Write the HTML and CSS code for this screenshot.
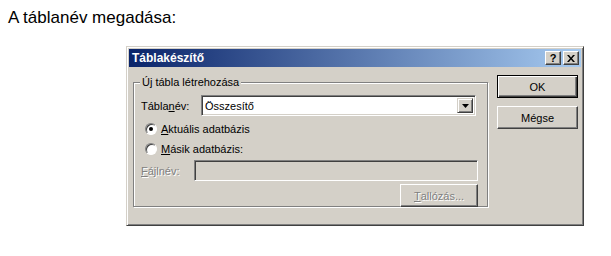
FILE: index.html
```html
<!DOCTYPE html>
<html lang="hu">
<head>
<meta charset="utf-8">
<title>Táblakészítő</title>
<link rel="stylesheet" href="styles.css">
</head>
<body>
<p class="caption">A táblanév megadása:</p>
<div class="dialog">
  <div class="titlebar">
    <span class="title">Táblakészítő</span>
    <div class="tbtns">
      <span class="tbtn">?</span>
      <span class="tbtn x">
        <svg width="8" height="7" viewBox="0 0 8 7"><path d="M0 0h2l2 2.5L6 0h2L5 3.5 8 7H6L4 4.5 2 7H0l3-3.5z" fill="#000"/></svg>
      </span>
    </div>
  </div>
  <div class="content">
    <fieldset class="group">
      <legend>Új tábla létrehozása</legend>
      <div class="row name-row">
        <label class="lbl">Tábla<u>n</u>év:</label>
        <div class="combo">
          <span class="combo-text">Összesítő</span>
          <span class="drop"><svg width="7" height="4" viewBox="0 0 7 4"><path d="M0 0h7L3.5 4z" fill="#000"/></svg></span>
        </div>
      </div>
      <div class="radio-row">
        <span class="radio checked"></span>
        <span><u>A</u>ktuális adatbázis</span>
      </div>
      <div class="radio-row">
        <span class="radio"></span>
        <span><u>M</u>ásik adatbázis:</span>
      </div>
      <div class="row file-row">
        <label class="lbl disabled"><u>F</u>ájlnév:</label>
        <div class="textbox"></div>
      </div>
      <div class="browse-row">
        <span class="btn browse disabled"><u>T</u>allózás...</span>
      </div>
    </fieldset>
    <div class="buttons">
      <span class="btn default">OK</span>
      <span class="btn">Mégse</span>
    </div>
  </div>
</div>
</body>
</html>
```
FILE: styles.css
```css
html, body {
  margin: 0;
  padding: 0;
  background: #fff;
}
.caption {
  margin: 0;
  padding: 9px 0 0 8px;
  font-family: "Liberation Sans", Arial, sans-serif;
  font-size: 17px;
  line-height: 18px;
  color: #000;
}
.dialog {
  margin: 19px 0 0 126px;
  width: 458px;
  height: 180px;
  box-sizing: border-box;
  background: #d4d0c8;
  border: 1px solid;
  border-color: #d4d0c8 #404040 #404040 #d4d0c8;
  box-shadow: inset 1px 1px 0 #fff, inset -1px -1px 0 #808080;
  padding: 2px;
  font-family: "Liberation Sans", Tahoma, sans-serif;
  font-size: 11px;
  color: #000;
  display: flex;
  flex-direction: column;
}
.titlebar {
  height: 18px;
  background: linear-gradient(to right, #0a246a, #a6caf0);
  display: flex;
  align-items: center;
  justify-content: space-between;
  padding: 0 2px 0 3px;
}
.title {
  color: #fff;
  font-weight: bold;
  font-size: 12px;
}
.tbtns {
  display: flex;
  gap: 2px;
}
.tbtn {
  width: 16px;
  height: 14px;
  box-sizing: border-box;
  background: #d4d0c8;
  border: 1px solid;
  border-color: #fff #404040 #404040 #fff;
  box-shadow: inset -1px -1px 0 #808080;
  display: flex;
  align-items: center;
  justify-content: center;
  font-weight: bold;
  font-size: 11px;
  line-height: 1;
}
.content {
  display: flex;
  align-items: flex-start;
  padding: 8px 0 0 4px;
  gap: 9px;
}
.group {
  margin: 0;
  width: 355px;
  height: 131px;
  box-sizing: border-box;
  border: 1px solid #808080;
  box-shadow: inset 1px 1px 0 #fff, 1px 1px 0 #fff;
  padding: 6px 8px 0 7px;
  margin-top: 1px;
}
.group legend {
  padding: 0 2px;
  margin-left: -1px;
  background: #d4d0c8;
  font-size: 11px;
  line-height: 13px;
}
.row {
  display: flex;
  align-items: center;
}
.lbl {
  width: 60px;
}
.combo {
  width: 275px;
  height: 21px;
  box-sizing: border-box;
  background: #fff;
  border: 1px solid;
  border-color: #808080 #fff #fff #808080;
  box-shadow: inset 1px 1px 0 #404040, inset -1px -1px 0 #d4d0c8;
  display: flex;
  align-items: center;
  justify-content: space-between;
  padding: 2px;
}
.combo-text {
  padding-left: 1px;
}
.drop {
  width: 16px;
  height: 15px;
  box-sizing: border-box;
  background: #d4d0c8;
  border: 1px solid;
  border-color: #d4d0c8 #404040 #404040 #d4d0c8;
  box-shadow: inset 1px 1px 0 #fff, inset -1px -1px 0 #808080;
  display: flex;
  align-items: center;
  justify-content: center;
}
.radio-row {
  display: flex;
  align-items: center;
  gap: 4px;
  height: 20px;
  padding-left: 4px;
}
.name-row + .radio-row {
  margin-top: 3px;
}
.radio {
  width: 12px;
  height: 12px;
  box-sizing: border-box;
  border-radius: 50%;
  background: #fff;
  border: 1px solid;
  border-color: #808080 #fff #fff #808080;
  box-shadow: inset 1px 1px 0 #404040;
  position: relative;
}
.radio.checked::after {
  content: "";
  position: absolute;
  left: 3px;
  top: 3px;
  width: 4px;
  height: 4px;
  border-radius: 50%;
  background: #000;
}
.file-row {
  margin-top: 1px;
}
.file-row .lbl {
  width: 53px;
}
.disabled {
  color: #808080;
  text-shadow: 1px 1px 0 #fff;
}
.textbox {
  width: 284px;
  height: 21px;
  box-sizing: border-box;
  background: #d4d0c8;
  border: 1px solid;
  border-color: #808080 #fff #fff #808080;
  box-shadow: inset 1px 1px 0 #404040, inset -1px -1px 0 #d4d0c8;
}
.browse-row {
  display: flex;
  justify-content: flex-end;
  padding-right: 1px;
  margin-top: 3px;
}
.btn {
  width: 81px;
  height: 23px;
  box-sizing: border-box;
  background: #d4d0c8;
  border: 1px solid;
  border-color: #fff #404040 #404040 #fff;
  box-shadow: inset -1px -1px 0 #808080;
  display: flex;
  align-items: center;
  justify-content: center;
}
.btn.browse {
  width: 78px;
}
.btn.default {
  border: 1px solid #000;
  box-shadow: inset 1px 1px 0 #fff, inset -1px -1px 0 #404040, inset -2px -2px 0 #808080;
}
.buttons {
  display: flex;
  flex-direction: column;
  gap: 8px;
}
```
